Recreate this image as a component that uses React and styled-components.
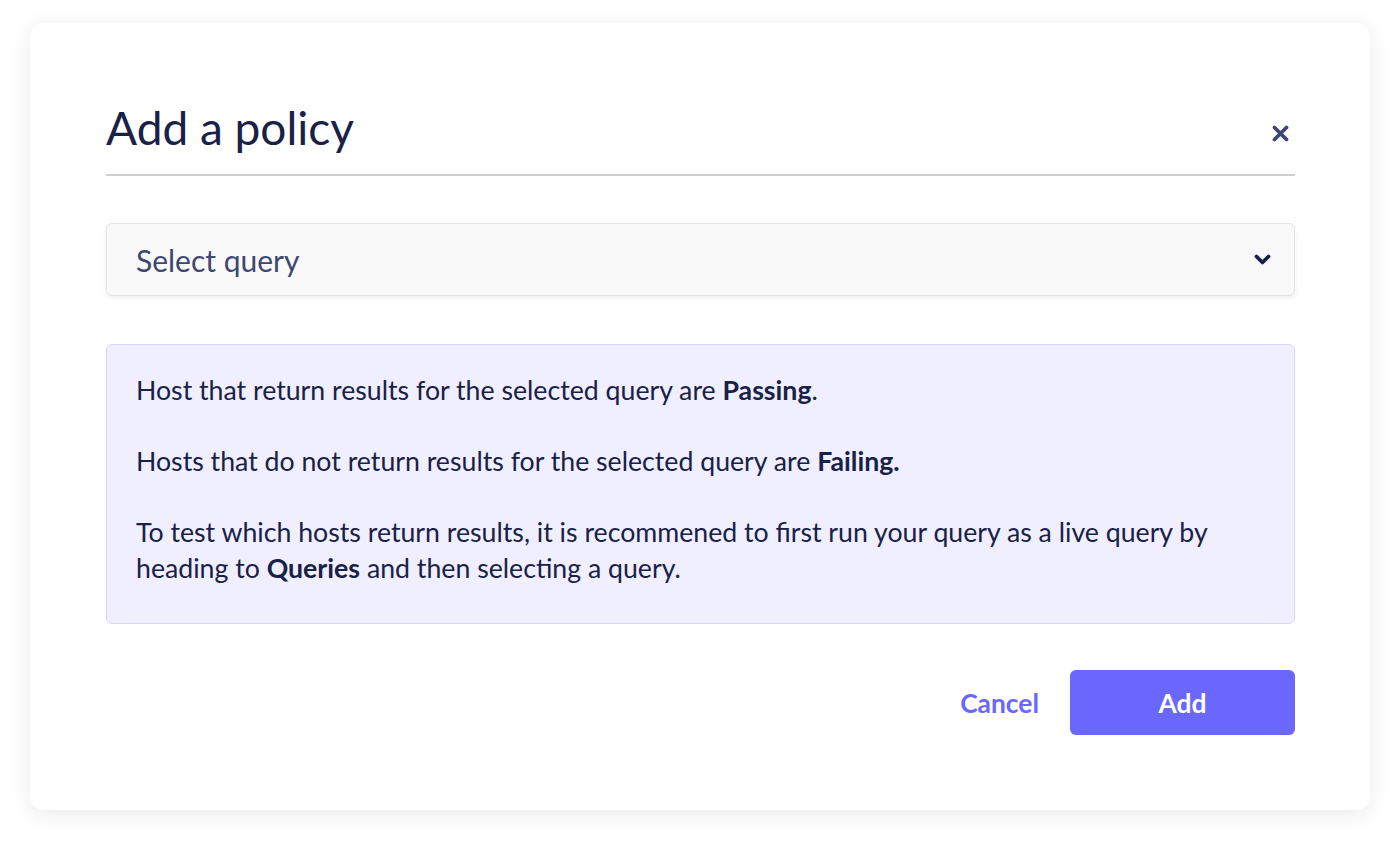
import React from 'react'
import styled, { createGlobalStyle } from 'styled-components'

const GlobalStyle = createGlobalStyle`
    * {
        box-sizing: border-box;
    }
    body {
        margin: 0;
        background: #ffffff;
        font-family: Lato, 'Noto Sans', sans-serif;
        color: #192147;
    }
`

const Page = styled.div`
    min-height: 100vh;
    padding: 23px 30px 38px;
`

const Modal = styled.div`
    background: #ffffff;
    border-radius: 14px;
    box-shadow: 0 4px 22px rgba(30, 30, 60, 0.09);
    padding: 79px 75px 75px 76px;
`

const Header = styled.div`
    display: flex;
    align-items: center;
    justify-content: space-between;
    padding-bottom: 20px;
    border-bottom: 2px solid #cdced6;
`

const Title = styled.h1`
    margin: 0;
    font-size: 46px;
    line-height: 52px;
    font-weight: 400;
    color: #192147;
`

const CloseButton = styled.button`
    display: flex;
    align-items: center;
    justify-content: center;
    width: 30px;
    height: 30px;
    margin-top: 11px;
    padding: 0;
    border: none;
    background: none;
    cursor: pointer;
`

const Select = styled.div`
    display: flex;
    align-items: center;
    justify-content: space-between;
    height: 73px;
    margin-top: 47px;
    padding: 0 23px 0 29px;
    background: #f9f9fa;
    border: 1px solid #e2e4ea;
    border-radius: 6px;
    box-shadow: 0 2px 5px rgba(0, 0, 0, 0.07);
    font-size: 30px;
    color: #3e4771;
`

const Info = styled.div`
    margin-top: 48px;
    padding: 28px 29px 37px;
    background: #f0efff;
    border: 1px solid #d8d6fb;
    border-radius: 6px;
    font-size: 26.7px;
    line-height: 35.5px;
    color: #192147;
`

const Para = styled.p`
    margin: 0 0 35.5px;
    &:last-child {
        margin-bottom: 0;
    }
    b {
        font-weight: 700;
    }
`

const Footer = styled.div`
    display: flex;
    justify-content: flex-end;
    align-items: center;
    gap: 31px;
    margin-top: 46px;
`

const TextButton = styled.button`
    border: none;
    background: none;
    padding: 0;
    font-family: inherit;
    font-size: 26.4px;
    font-weight: 700;
    color: #6a67fe;
    cursor: pointer;
`

const PrimaryButton = styled.button`
    width: 225px;
    height: 65px;
    border: none;
    border-radius: 6px;
    background: #6a67fe;
    font-family: inherit;
    font-size: 26.4px;
    font-weight: 700;
    color: #ffffff;
    cursor: pointer;
`

const App = () => (
    <Page>
        <GlobalStyle />
        <Modal>
            <Header>
                <Title>Add a policy</Title>
                <CloseButton aria-label="Close">
                    <svg width="17" height="17" viewBox="0 0 17 17">
                        <path
                            d="M2.5 2.5 L14.5 14.5 M14.5 2.5 L2.5 14.5"
                            stroke="#3e4771"
                            strokeWidth="3.8"
                            strokeLinecap="round"
                        />
                    </svg>
                </CloseButton>
            </Header>

            <Select>
                <span>Select query</span>
                <svg width="17" height="12" viewBox="0 0 17 12">
                    <path
                        d="M2.5 2.5 L8.5 8.5 L14.5 2.5"
                        fill="none"
                        stroke="#192147"
                        strokeWidth="3.8"
                        strokeLinecap="round"
                        strokeLinejoin="round"
                    />
                </svg>
            </Select>

            <Info>
                <Para>
                    Host that return results for the selected query are <b>Passing</b>.
                </Para>
                <Para>
                    Hosts that do not return results for the selected query are <b>Failing.</b>
                </Para>
                <Para>
                    To test which hosts return results, it is recommened to first run your query as a
                    live query by heading to <b>Queries</b> and then selecting a query.
                </Para>
            </Info>

            <Footer>
                <TextButton>Cancel</TextButton>
                <PrimaryButton>Add</PrimaryButton>
            </Footer>
        </Modal>
    </Page>
)

export default App
